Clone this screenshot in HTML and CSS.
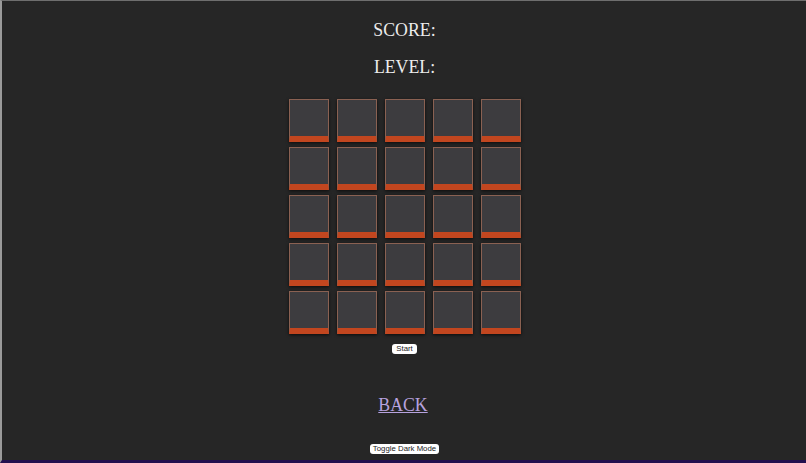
FILE: index.html
```html
<!DOCTYPE html>
<html>
<head>
<meta charset="utf-8">
<link rel="stylesheet" href="styles.css">
</head>
<body>
<div class="frame">
  <div class="page">
    <div class="stat">SCORE:</div>
    <div class="stat level">LEVEL:</div>
    <div class="grid">
      <div class="tile"></div><div class="tile"></div><div class="tile"></div><div class="tile"></div><div class="tile"></div>
      <div class="tile"></div><div class="tile"></div><div class="tile"></div><div class="tile"></div><div class="tile"></div>
      <div class="tile"></div><div class="tile"></div><div class="tile"></div><div class="tile"></div><div class="tile"></div>
      <div class="tile"></div><div class="tile"></div><div class="tile"></div><div class="tile"></div><div class="tile"></div>
      <div class="tile"></div><div class="tile"></div><div class="tile"></div><div class="tile"></div><div class="tile"></div>
    </div>
    <button class="btn start">Start</button>
    <a class="back" href="#">BACK</a>
    <button class="btn toggle">Toggle Dark Mode</button>
  </div>
</div>
</body>
</html>
```
FILE: styles.css
```css
html, body {
  margin: 0;
  padding: 0;
  background: #262626;
}
.frame {
  box-sizing: border-box;
  width: 806px;
  height: 463px;
  border-left: 2px solid #9a9a9a;
  border-top: 1px solid #6e6e6e;
  border-bottom: 3px solid #22104f;
  background: #262626;
  overflow: hidden;
}
.page {
  display: flex;
  flex-direction: column;
  align-items: center;
  padding-top: 19px;
  padding-left: 1px;
  font-family: "Liberation Serif", "Times New Roman", serif;
  color: #ececec;
}
.stat {
  font-size: 17.8px;
  line-height: 20px;
}
.level {
  margin-top: 17px;
}
.grid {
  margin-top: 22px;
  display: grid;
  grid-template-columns: repeat(5, 40px);
  grid-auto-rows: 43px;
  column-gap: 8px;
  row-gap: 5px;
}
.tile {
  box-sizing: border-box;
  background: #3d3c3f;
  border: 1px solid #8a6152;
  border-bottom: 6px solid #c2461f;
  box-shadow: 0 1px 3px rgba(0, 0, 0, 0.7);
}
.btn {
  font-family: "Liberation Sans", Arial, sans-serif;
  font-size: 7.8px;
  line-height: 10px;
  height: 10px;
  padding: 0;
  background: #ffffff;
  color: #222222;
  border: none;
  border-radius: 3px;
}
.start {
  margin-top: 10px;
  width: 25px;
}
.back {
  margin-top: 41px;
  margin-right: 3px;
  font-size: 17.8px;
  line-height: 20px;
  color: #b7a2de;
  text-decoration: underline;
}
.toggle {
  margin-top: 29px;
  width: 69px;
}
```
